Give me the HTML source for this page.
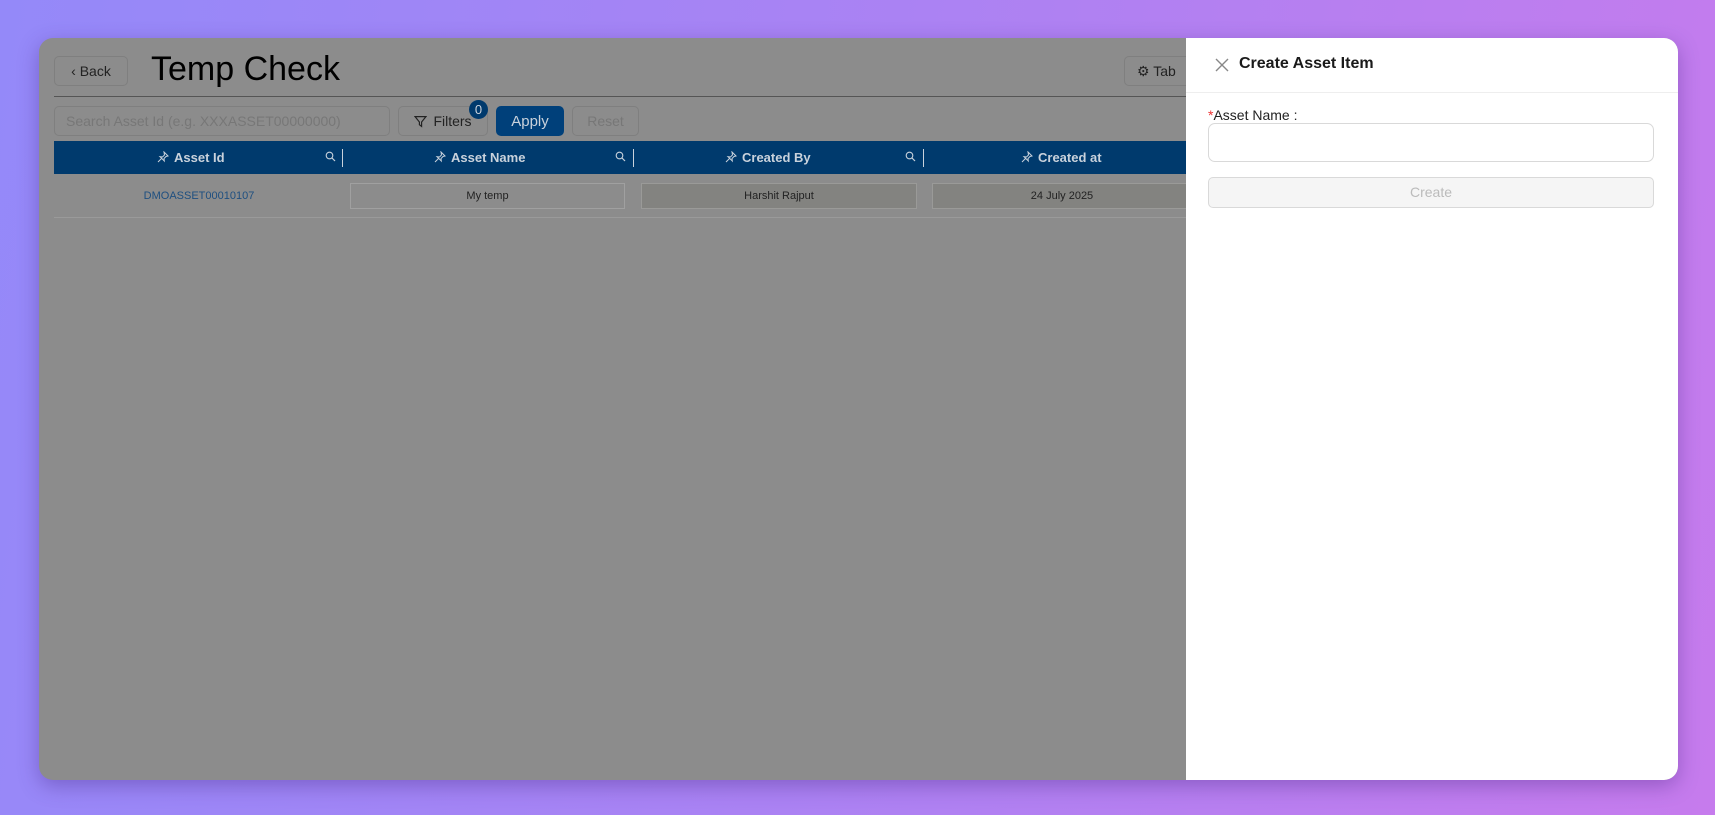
<!DOCTYPE html>
<html><head><meta charset="utf-8"><style>
*{box-sizing:border-box;margin:0;padding:0}
body{width:1715px;height:815px;overflow:hidden;background:linear-gradient(100deg,#9489f9 0%,#ab82f3 50%,#c67bed 100%);font-family:"Liberation Sans",sans-serif;position:relative}
.card{position:absolute;left:39px;top:38px;width:1639px;height:742px;border-radius:14px;overflow:hidden;background:#8c8c8c;box-shadow:0 6px 20px rgba(60,30,120,.35)}
.a{position:absolute}
.btn{position:absolute;border:1px solid #7f7f7f;border-radius:5px;font-size:14px;color:#222;display:flex;align-items:center;justify-content:center}
.hd{position:absolute;left:15px;top:103px;width:1132px;height:33px;background:#003a6d;color:#c9d2dc;font-weight:bold;font-size:13px}
.hd span{position:absolute;top:9px}
.hd svg{position:absolute;top:10px}
.cell{position:absolute;top:145px;height:26px;font-size:11px;color:#222;display:flex;align-items:center;justify-content:center}
.panel{position:absolute;left:1147px;top:0;width:492px;height:742px;background:#fff}
</style></head><body>
<div class="card">
 <div class="btn" style="left:15px;top:18px;width:74px;height:30px;">&#8249; Back</div>
 <div class="a" style="left:112px;top:12px;font-size:34px;color:#000">Temp Check</div>
 <div class="a" style="left:15px;top:58px;width:1132px;height:1px;background:#555"></div>
 <div class="btn" style="left:15px;top:68px;width:336px;height:30px;justify-content:flex-start;padding-left:11px;color:#777">Search Asset Id (e.g. XXXASSET00000000)</div>
 <div class="btn" style="left:359px;top:68px;width:90px;height:30px;"><svg width="13" height="13" viewBox="0 0 12 12" style="margin-right:6px"><path d="M1 1.5h10L7 6.5v4L5 9V6.5z" fill="none" stroke="#222" stroke-width="1.1"/></svg>Filters</div>
 <div class="a" style="left:430px;top:62px;width:19px;height:19px;border-radius:50%;background:#003a6d;color:#c9d2dc;font-size:13px;text-align:center;line-height:19px">0</div>
 <div class="btn" style="left:457px;top:68px;width:68px;height:30px;background:#00407a;border-color:#00407a;color:#c9d2dc;font-size:15px">Apply</div>
 <div class="btn" style="left:533px;top:68px;width:67px;height:30px;color:#777">Reset</div>
 <div class="btn" style="left:1085px;top:18px;width:70px;height:30px;justify-content:flex-start;padding-left:12px">&#9881; Tab</div>
 <div class="hd">
  <svg style="left:103px" width="12" height="12" viewBox="0 0 12 12"><path d="M7 1l4 4-2 .5-2 2 .3 2.5L3 5.7l2.5.3 2-2z M4.5 7.5L1 11" fill="none" stroke="#c9d2dc" stroke-width="1"/></svg><span style="left:120px">Asset Id</span>
  <svg style="left:271px" width="11" height="11" viewBox="0 0 11 11"><circle cx="4.5" cy="4.5" r="3.3" fill="none" stroke="#c9d2dc" stroke-width="1.1"/><path d="M7 7l3 3" stroke="#c9d2dc" stroke-width="1.2"/></svg>
  <div class="a" style="left:288px;top:8px;width:1px;height:18px;background:#c9d2dc"></div>
  <svg style="left:380px" width="12" height="12" viewBox="0 0 12 12"><path d="M7 1l4 4-2 .5-2 2 .3 2.5L3 5.7l2.5.3 2-2z M4.5 7.5L1 11" fill="none" stroke="#c9d2dc" stroke-width="1"/></svg><span style="left:397px">Asset Name</span>
  <svg style="left:561px" width="11" height="11" viewBox="0 0 11 11"><circle cx="4.5" cy="4.5" r="3.3" fill="none" stroke="#c9d2dc" stroke-width="1.1"/><path d="M7 7l3 3" stroke="#c9d2dc" stroke-width="1.2"/></svg>
  <div class="a" style="left:579px;top:8px;width:1px;height:18px;background:#c9d2dc"></div>
  <svg style="left:671px" width="12" height="12" viewBox="0 0 12 12"><path d="M7 1l4 4-2 .5-2 2 .3 2.5L3 5.7l2.5.3 2-2z M4.5 7.5L1 11" fill="none" stroke="#c9d2dc" stroke-width="1"/></svg><span style="left:688px">Created By</span>
  <svg style="left:851px" width="11" height="11" viewBox="0 0 11 11"><circle cx="4.5" cy="4.5" r="3.3" fill="none" stroke="#c9d2dc" stroke-width="1.1"/><path d="M7 7l3 3" stroke="#c9d2dc" stroke-width="1.2"/></svg>
  <div class="a" style="left:869px;top:8px;width:1px;height:18px;background:#c9d2dc"></div>
  <svg style="left:967px" width="12" height="12" viewBox="0 0 12 12"><path d="M7 1l4 4-2 .5-2 2 .3 2.5L3 5.7l2.5.3 2-2z M4.5 7.5L1 11" fill="none" stroke="#c9d2dc" stroke-width="1"/></svg><span style="left:984px">Created at</span>
 </div>
 <div class="cell" style="left:15px;width:290px;color:#1e4f80">DMOASSET00010107</div>
 <div class="cell" style="left:311px;width:275px;border:1px solid #a0a0a0">My temp</div>
 <div class="cell" style="left:602px;width:276px;background:#838380;border:1px solid #9a9a98">Harshit Rajput</div>
 <div class="cell" style="left:893px;width:260px;background:#838380;border:1px solid #9a9a98">24 July 2025</div>
 <div class="a" style="left:15px;top:179px;width:1132px;height:1px;background:#9a9a9a"></div>
 <div class="panel">
  <svg class="a" style="left:29px;top:20px" width="14" height="14" viewBox="0 0 14 14"><path d="M1 1l12 12M13 1L1 13" stroke="#888" stroke-width="1.4"/></svg>
  <div class="a" style="left:53px;top:17px;font-size:16px;font-weight:bold;color:#1a1a1a">Create Asset Item</div>
  <div class="a" style="left:0;top:54px;width:492px;height:1px;background:#eee"></div>
  <div class="a" style="left:22px;top:69px;font-size:14px;color:#222"><span style="color:#e33">*</span>Asset Name :</div>
  <div class="a" style="left:22px;top:85px;width:446px;height:39px;border:1px solid #d9d9d9;border-radius:7px"></div>
  <div class="a" style="left:22px;top:139px;width:446px;height:31px;border:1px solid #d9d9d9;border-radius:5px;background:#f5f5f5;color:#bbb;font-size:14px;text-align:center;line-height:29px">Create</div>
 </div>
</div>
</body></html>
